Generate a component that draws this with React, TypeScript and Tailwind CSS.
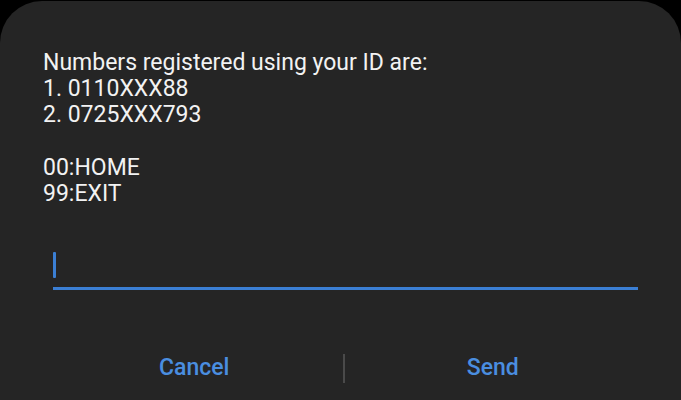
import React from 'react';

const lines = [
  'Numbers registered using your ID are:',
  '1. 0110XXX88',
  '2. 0725XXX793',
  '',
  '00:HOME',
  '99:EXIT',
];

const App = () => {
  return (
    <div className="h-[400px] w-[681px] overflow-hidden bg-black" style={{ fontFamily: 'Roboto, "Noto Sans", sans-serif' }}>
      <div className="mt-[1px] h-[440px] w-full rounded-[42px] bg-[#252525]">
        <div className="px-[43px] pt-[49px] text-[23px] leading-[26.2px] text-[#f2f2f2]">
          {lines.map((line, i) => (
            <div key={i} className="h-[26.2px]">
              {line}
            </div>
          ))}
        </div>

        <div className="ml-[53px] mr-[43px] mt-[43px] h-[40px] border-b-[3px] border-[#3b7fd4] pt-[2px]">
          <div className="h-[26px] w-[3px] rounded-[1px] bg-[#3b7fd4]" />
        </div>

        <div className="mt-[61px] flex items-center pl-[46px] pr-[40px]">
          <button className="flex-1 text-center text-[23px] font-medium text-[#4a8ee0]">
            Cancel
          </button>
          <div className="h-[29px] w-[2px] bg-[#4a4a4a]" />
          <button className="flex-1 text-center text-[23px] font-medium text-[#4a8ee0]">
            Send
          </button>
        </div>
      </div>
    </div>
  );
};

export default App;
